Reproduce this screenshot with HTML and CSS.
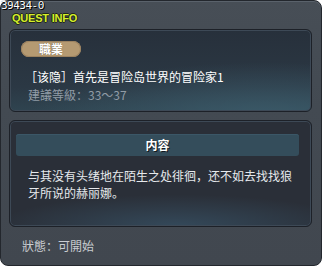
FILE: index.html
```html
<!DOCTYPE html>
<html lang="zh">
<head>
<meta charset="utf-8">
<link rel="stylesheet" href="styles.css">
</head>
<body>
<div class="window">
  <div class="header">
    <div class="quest-id">39434-0</div>
    <div class="title">QUEST INFO</div>
  </div>
  <div class="panel panel-info">
    <div class="tag">職業</div>
    <div class="quest-name">［该隐］首先是冒险岛世界的冒险家1</div>
    <div class="quest-level">建議等級：33～37</div>
  </div>
  <div class="panel panel-content">
    <div class="section-bar">内容</div>
    <div class="desc">与其没有头绪地在陌生之处徘徊，还不如去找找狼牙所说的赫丽娜。</div>
  </div>
  <div class="status">狀態：可開始</div>
</div>
</body>
</html>
```

FILE: styles.css
```css
html, body {
  margin: 0;
  padding: 0;
  width: 322px;
  height: 266px;
  overflow: hidden;
  background: #ffffff;
}

body {
  font-family: "Noto Sans CJK SC", "Noto Sans CJK TC", "Liberation Sans", sans-serif;
}

.window {
  box-sizing: border-box;
  width: 322px;
  height: 266px;
  background: linear-gradient(#474e56, #434a52 40%, #41474f);
  border: 1px solid #23272d;
  border-radius: 8px;
  box-shadow: inset 0 1px 0 #5a626b;
  padding: 0 8px 0 8px;
  display: flex;
  flex-direction: column;
}

.header {
  height: 28px;
  margin: 0 -8px;
}

.quest-id {
  font-family: "DejaVu Sans Mono", monospace;
  font-size: 11px;
  line-height: 10px;
  height: 10px;
  color: #ffffff;
  letter-spacing: -0.5px;
  margin-left: 0;
  text-shadow: 0 0 1px #000, 1px 1px 0 #000;
}

.title {
  font-family: "Liberation Sans", sans-serif;
  font-weight: bold;
  font-size: 11px;
  line-height: 12px;
  color: #d6ef2a;
  margin-left: 11px;
  margin-top: 1px;
  letter-spacing: -0.2px;
  text-shadow: 1px 0 0 #20261a, -1px 0 0 #20261a, 0 1px 0 #20261a, 0 -1px 0 #20261a;
}

.panel {
  box-sizing: border-box;
  width: 303px;
  border: 1px solid #1d2128;
  border-radius: 6px;
  box-shadow: inset 0 0 0 1px #3d4956;
}

.panel-info {
  height: 83px;
  padding: 11px 11px 0 11px;
  background:
    radial-gradient(ellipse 80% 70% at 85% 110%, #3b5a69 0%, rgba(59, 90, 105, 0) 100%),
    linear-gradient(#27303b, #2b3844 70%, #2f4450);
}

.tag {
  width: 60px;
  height: 16px;
  border-radius: 8px;
  background: #b59a72;
  box-shadow: inset 0 0 0 1px #9c8260;
  color: #ffffff;
  font-weight: bold;
  font-size: 12px;
  line-height: 16px;
  text-align: center;
  text-shadow: 0 0 1px #5a4a34;
}

.quest-name {
  margin-top: 12px;
  margin-left: 4px;
  font-size: 12px;
  line-height: 16px;
  color: #ffffff;
  white-space: nowrap;
}

.quest-level {
  margin-top: 2px;
  margin-left: 7px;
  font-size: 12px;
  line-height: 16px;
  color: #919ca6;
}

.panel-content {
  margin-top: 8px;
  height: 107px;
  padding: 13px 12px 0 6px;
  background:
    radial-gradient(ellipse 60% 30% at 55% 100%, #34495a 0%, rgba(52, 73, 90, 0) 100%),
    #2a2f38;
}

.section-bar {
  height: 22px;
  border-radius: 3px;
  background: #344d5b;
  box-shadow: inset 0 1px 0 #3b5767;
  color: #ffffff;
  font-weight: bold;
  font-size: 12px;
  line-height: 22px;
  text-align: center;
  text-shadow: 1px 1px 0 #111820;
}

.desc {
  margin-top: 11px;
  margin-left: 12px;
  width: 270px;
  font-size: 12px;
  line-height: 17px;
  color: #e6e9ec;
}

.status {
  margin-top: 11px;
  margin-left: 13px;
  font-size: 12px;
  line-height: 16px;
  color: #c9cdd1;
}
```
